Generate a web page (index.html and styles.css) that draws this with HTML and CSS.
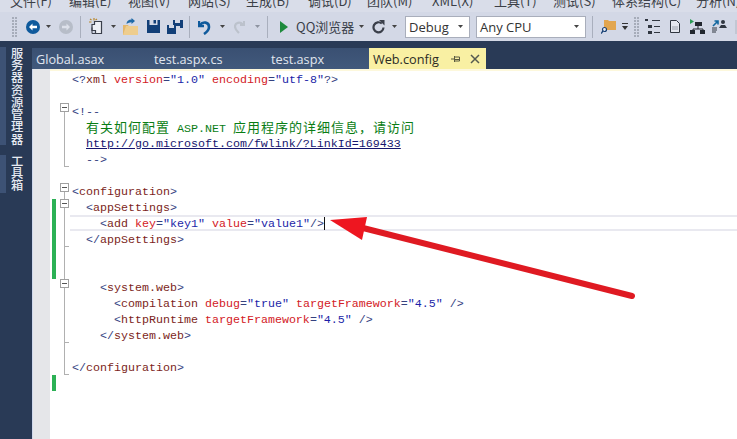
FILE: index.html
```
<!DOCTYPE html>
<html lang="zh">
<head>
<meta charset="utf-8">
<title>Web.config</title>
<link rel="stylesheet" href="styles.css">
</head>
<body>
<div class="app">
  <nav class="menu">
    <span class="mi w59">文件(F)</span><span class="mi w59">编辑(E)</span><span class="mi w60">视图(V)</span><span class="mi w58">网站(S)</span><span class="mi w62">生成(B)</span><span class="mi w59">调试(D)</span><span class="mi w65">团队(M)</span><span class="mi w62">XML(X)</span><span class="mi w59">工具(T)</span><span class="mi w59">测试(S)</span><span class="mi w84">体系结构(C)</span><span class="mi">分析(N)</span>
  </nav>
  <div class="toolbar">
    <span class="grip"></span>
    <svg class="m8" width="14" height="14" viewBox="0 0 14 14"><circle cx="7" cy="7" r="7" fill="#0f5a9c"/><path d="M3 7l3.500-3.500v2.300h4.500v2.400h-4.500v2.300z" fill="#fff"/></svg>
    <svg class="m6" width="5" height="3" viewBox="0 0 5 3"><path d="M0 0h5l-2.500 3z" fill="#444"/></svg>
    <svg class="m8" width="14" height="14" viewBox="0 0 14 14"><circle cx="7" cy="7" r="7" fill="#b7bdc8"/><path d="M11 7l-3.500-3.500v2.300h-4.500v2.400h4.500v2.300z" fill="#dde1ea"/></svg>
    <span class="sep m7"></span>
    <svg class="m8" width="14" height="17" viewBox="0 0 14 17"><path d="M1 1l1.500 1M5 0v2.500M8 1l-1.500 1M0 4h2.500" stroke="#b9872a" stroke-width="1.200" fill="none"/><path d="M5.500 3.500h7v12h-6v-3h-3.500v-6h2.500z" fill="#eef0f5" stroke="#3a3f4a" stroke-width="1.200"/><path d="M3 9.500v6h3" stroke="#3a3f4a" fill="none"/></svg>
    <svg class="m8" width="5" height="3" viewBox="0 0 5 3"><path d="M0 0h5l-2.500 3z" fill="#444"/></svg>
    <svg class="m7" width="15" height="17" viewBox="0 0 15 17"><path d="M0 7h5l1.500 2h8.500v8h-15z" fill="#e3b76c"/><path d="M3 8h12v9h-15z" fill="#eecd8e"/><path d="M3.500 6c0-3 2-4.500 5-4.500v-1.500l3.500 3-3.500 3v-1.800c-2 0-3.200 .7-5 1.800z" fill="#1f6aa8"/></svg>
    <svg class="m9" width="13" height="13" viewBox="0 0 13 13"><path d="M0 0h13v13h-13z" fill="#123f78"/><rect x="2.500" y="0" width="8" height="5" fill="#d3d8e6"/><rect x="6.500" y="0" width="2.500" height="3.500" fill="#123f78"/></svg>
    <svg class="m7" width="16" height="14" viewBox="0 0 16 14"><path d="M6 0h10v8h-3v-2h-7z" fill="#123f78"/><rect x="8" y="0" width="5" height="3" fill="#d3d8e6"/><path d="M0 5h9v9h-9z" fill="#123f78"/><rect x="2" y="5" width="5" height="3" fill="#d3d8e6"/></svg>
    <span class="sep m6"></span>
    <svg class="m8" width="13" height="16" viewBox="0 0 13 16"><path d="M1 2v5h5" fill="none" stroke="#0f5a9c" stroke-width="2.400"/><path d="M2 6c3-4 9-3 9 2 0 3-2 5-5 7" fill="none" stroke="#0f5a9c" stroke-width="2.600"/></svg>
    <svg class="m9" width="5" height="3" viewBox="0 0 5 3"><path d="M0 0h5l-2.500 3z" fill="#444"/></svg>
    <svg class="m9" width="11" height="14" viewBox="0 0 11 14"><path d="M10 1v4h-4" fill="none" stroke="#bcc2cc" stroke-width="2"/><path d="M9 4.500c-3-3-8-2-8 2 0 3 2 4.500 4 6.500" fill="none" stroke="#bcc2cc" stroke-width="2.200"/></svg>
    <svg class="m10" width="5" height="3" viewBox="0 0 5 3"><path d="M0 0h5l-2.500 3z" fill="#8d93a0"/></svg>
    <span class="sep m7"></span>
    <svg class="m12" width="8" height="12" viewBox="0 0 8 12"><path d="M0 0l8 6-8 6z" fill="#1d8a3c"/></svg>
    <span class="qq m8">QQ浏览器</span>
    <svg class="m7" width="5" height="3" viewBox="0 0 5 3"><path d="M0 0h5l-2.500 3z" fill="#444"/></svg>
    <svg class="m8" width="13" height="14" viewBox="0 0 13 14"><path d="M9.800 3.500a5 5 0 1 0 1.700 4" fill="none" stroke="#3a3f4a" stroke-width="2.200"/><path d="M7 0h5.500v5.500z" fill="#3a3f4a"/></svg>
    <svg class="m7" width="5" height="3" viewBox="0 0 5 3"><path d="M0 0h5l-2.500 3z" fill="#444"/></svg>
    <div class="combo debug m8"><span>Debug</span><svg width="5" height="3" viewBox="0 0 5 3"><path d="M0 0h5l-2.500 3z" fill="#444"/></svg></div>
    <div class="combo cpu m6"><span>Any CPU</span><svg width="5" height="3" viewBox="0 0 5 3"><path d="M0 0h5l-2.500 3z" fill="#444"/></svg></div>
    <span class="sep m6"></span>
    <svg class="m8" width="15" height="15" viewBox="0 0 15 15"><path d="M3 1h4l1 1h7v9h-12z" fill="#e2a64f"/><circle cx="3.500" cy="10.500" r="2" fill="#eef0f5" stroke="#163f73" stroke-width="1.200"/><path d="M2 12l-2 2.500" stroke="#163f73" stroke-width="1.400"/></svg>
    <svg class="m6" width="6" height="7" viewBox="0 0 6 7"><path d="M0 0h6v1h-6zM0 3h6l-3 4z" fill="#333"/></svg>
    <span class="grip m6"></span>
    <svg class="m5" width="15" height="15" viewBox="0 0 15 15"><path d="M0 0h3v2h-3zM3 6h4v3h-4zM3 12h4v3h-4zM9 7h6v1h-6zM9 13h6v1h-6zM7 1h8v1h-8z" fill="#303640"/></svg>
    <svg class="m10" width="10" height="13" viewBox="0 0 10 13"><path d="M.5 .5h6l3 3v9h-9z" fill="#e4e7ef" stroke="#303640"/><path d="M2 7h6M2 9h6" stroke="#9aa0ab"/></svg>
    <svg class="m10" width="15" height="15" viewBox="0 0 15 15"><path d="M0 0l4 2.500-4 2.500z" fill="#2a9a55"/><rect x="5" y="3" width="7" height="4" fill="#22272f"/><path d="M8 7v3M3 12v-2h10v2" stroke="#22272f" fill="none"/><rect x="0" y="11" width="5" height="4" fill="#22272f"/><rect x="10" y="11" width="5" height="4" fill="#22272f"/></svg>
    <svg class="m7" width="15" height="15" viewBox="0 0 15 15"><path d="M1 7l5-5m-3.500 0h3.500v3.500" stroke="#12679f" stroke-width="1.600" fill="none"/><circle cx="11" cy="3" r="2" fill="#303640"/><path d="M7 9l2-3h4l2 3z" fill="#303640"/><path d="M0 9h5M0 11h5M0 13h4" stroke="#303640"/></svg>
    <span class="faint m8"></span>
  </div>
  <div class="main">
    <aside class="side">
      <div class="stab st1"><i></i><span>服务器资源管理器</span></div>
      <div class="stab st2"><i></i><span>工具箱</span></div>
    </aside>
    <section class="doc">
      <div class="tabs">
        <div class="tab t1">Global.asax</div>
        <div class="tab t2">test.aspx.cs</div>
        <div class="tab t3">test.aspx</div>
        <div class="tab active">
          <span>Web.config</span>
          <svg class="pin" width="10" height="8" viewBox="0 0 10 8"><path d="M0 4h3M3.500 1v6M3.500 2h5v4h-5M3.500 4.500h5" fill="none" stroke="#5a5a40"/></svg>
          <svg class="close" width="10" height="10" viewBox="0 0 10 10"><path d="M1 1l8 8M9 1l-8 8" stroke="#555a50" stroke-width="1.500"/></svg>
        </div>
      </div>
      <div class="editor">
        <div class="gutter"></div>
        <div class="code">
          <div class="line"><b class="chg"></b><b class="fold"></b><span class="txt"><s>&lt;?</s><u>xml</u> <em>version</em><s>=</s><q>"1.0"</q> <em>encoding</em><s>=</s><q>"utf-8"</q><s>?&gt;</s></span></div>
          <div class="line"><b class="chg"></b><b class="fold"></b><span class="txt"></span></div>
          <div class="line"><b class="chg"></b><b class="fold box low"><i></i></b><span class="txt"><s>&lt;!--</s></span></div>
          <div class="line"><b class="chg"></b><b class="fold bar"></b><span class="txt cm">  <span class="cjk">有关如何配置</span> ASP.NET <span class="cjk">应用程序的详细信息，请访问</span></span></div>
          <div class="line"><b class="chg"></b><b class="fold bar"></b><span class="txt">  <a class="lnk">http://go.microsoft.com/fwlink/?LinkId=169433</a></span></div>
          <div class="line"><b class="chg"></b><b class="fold bar tick"></b><span class="txt">  <s>--&gt;</s></span></div>
          <div class="line"><b class="chg"></b><b class="fold"></b><span class="txt"></span></div>
          <div class="line"><b class="chg"></b><b class="fold box low"><i></i></b><span class="txt"><s>&lt;</s><u>configuration</u><s>&gt;</s></span></div>
          <div class="line"><b class="chg on"></b><b class="fold box bar"><i></i></b><span class="txt">  <s>&lt;</s><u>appSettings</u><s>&gt;</s></span></div>
          <div class="line"><b class="chg on"></b><b class="fold bar"></b><span class="txt cur">    <s>&lt;</s><u>add</u> <em>key</em><s>=</s><q>"key1"</q> <em>value</em><s>=</s><q>"value1"</q><s>/&gt;</s><span class="caret"></span></span></div>
          <div class="line"><b class="chg on"></b><b class="fold bar tick"></b><span class="txt">  <s>&lt;/</s><u>appSettings</u><s>&gt;</s></span></div>
          <div class="line"><b class="chg on"></b><b class="fold bar"></b><span class="txt"></span></div>
          <div class="line"><b class="chg on"></b><b class="fold bar"></b><span class="txt"></span></div>
          <div class="line"><b class="chg"></b><b class="fold box bar"><i></i></b><span class="txt">    <s>&lt;</s><u>system.web</u><s>&gt;</s></span></div>
          <div class="line"><b class="chg"></b><b class="fold bar"></b><span class="txt">      <s>&lt;</s><u>compilation</u> <em>debug</em><s>=</s><q>"true"</q> <em>targetFramework</em><s>=</s><q>"4.5"</q> <s>/&gt;</s></span></div>
          <div class="line"><b class="chg"></b><b class="fold bar"></b><span class="txt">      <s>&lt;</s><u>httpRuntime</u> <em>targetFramework</em><s>=</s><q>"4.5"</q> <s>/&gt;</s></span></div>
          <div class="line"><b class="chg"></b><b class="fold bar tick"></b><span class="txt">    <s>&lt;/</s><u>system.web</u><s>&gt;</s></span></div>
          <div class="line"><b class="chg"></b><b class="fold bar"></b><span class="txt"></span></div>
          <div class="line"><b class="chg"></b><b class="fold bar tick"></b><span class="txt"><s>&lt;/</s><u>configuration</u><s>&gt;</s></span></div>
          <div class="line"><b class="chg on"></b><b class="fold"></b><span class="txt"></span></div>
        </div>
      </div>
    </section>
  </div>
  <svg class="arrow" width="737" height="439" viewBox="0 0 737 439">
    <path d="M363 228L632 296" stroke="#df1a22" stroke-width="6" stroke-linecap="round" fill="none"/>
    <path d="M330 220L367 217L362 240z" fill="#ee1620"/>
  </svg>
</div>
</body>
</html>
```
FILE: styles.css
```
* { box-sizing: border-box; }
html, body { margin: 0; padding: 0; height: 100%; overflow: hidden; }
.app { width: 737px; height: 439px; display: flex; flex-direction: column; position: relative; overflow: hidden; background: #293a56; font-family: "Open Sans", "Noto Sans CJK SC", sans-serif; }

.menu { height: 12px; flex: none; display: flex; padding-left: 10px; background: #d9dde9; overflow: hidden; font: 13px/16px "Noto Sans CJK SC", sans-serif; color: #3b3f47; align-items: flex-end; }
.mi { flex: none; display: block; height: 16px; margin-bottom: 3px; white-space: nowrap; }
.w59 { width: 59px; } .w60 { width: 60px; } .w58 { width: 58px; } .w62 { width: 62px; } .w65 { width: 65px; } .w84 { width: 84px; }

.toolbar { height: 29px; flex: none; display: flex; align-items: center; padding-left: 12px; background: #d3d8e6; overflow: hidden; }
.toolbar > * { flex: none; }
.m5 { margin-left: 5px; } .m6 { margin-left: 6px; } .m7 { margin-left: 7px; } .m8 { margin-left: 8px; } .m9 { margin-left: 9px; } .m10 { margin-left: 10px; } .m12 { margin-left: 12px; }
.grip { width: 6px; height: 20px; background: radial-gradient(circle at 1px 1px, #a6acb9 1px, transparent 1px) 0 0 / 3px 3px; }
.sep { width: 1px; height: 22px; background: #a9afbd; }
.qq { width: 56px; font: 13px/18px "Noto Sans CJK SC", sans-serif; color: #3a3f4a; white-space: nowrap; }
.combo { height: 22px; display: flex; align-items: center; justify-content: space-between; padding: 0 6px 0 3px; background: #fff; border: 1px solid #a9aebb; font: 13px/18px "Open Sans", sans-serif; color: #333; }
.debug { width: 65px; }
.cpu { width: 110px; }
.faint { width: 2px; height: 14px; background: #c2c7d3; }

.main { flex: 1; display: flex; min-height: 0; }
.side { width: 32px; flex: none; display: flex; flex-direction: column; padding-top: 6px; gap: 10px; background: #293a56; }
.stab { display: flex; }
.stab i { width: 6px; background: #3d5275; }
.stab span { writing-mode: vertical-rl; width: 18px; font: 500 12.250px/14px "Noto Sans CJK SC", sans-serif; color: #e6eaf2; }
.st1 { height: 98px; }
.st2 { height: 38px; }

.doc { flex: 1; display: flex; flex-direction: column; min-width: 0; }
.tabs { height: 28px; flex: none; display: flex; padding-top: 7px; background: #293a56; }
.tab { height: 21px; padding-left: 4px; font-size: 12.700px; line-height: 22px; color: #e1e6ef; background: linear-gradient(#3a5072, #41597c); white-space: nowrap; }
.t1 { width: 118px; }
.t2 { width: 117px; }
.t3 { width: 102px; }
.tab.active { width: 117px; display: flex; align-items: center; color: #2b2b25; background: #f9f0a3; }
.pin { margin-left: 12px; }
.close { margin-left: 9px; }

.editor { flex: 1; display: flex; background: #fff; border-top: 2px solid #fdf8dc; min-height: 0; }
.gutter { width: 18px; flex: none; background: #e5e6e9; border-left: 1px solid #cfd8ec; margin-top: -2px; }
.code { flex: 1; min-width: 0; }
.line { height: 16px; display: flex; padding-left: 2px; }
.line b { display: block; flex: none; font-weight: 400; }
.chg { width: 4px; }
.chg.on { background: #2cb155; }
.fold { width: 14px; display: flex; align-items: center; padding-left: 4px; background-repeat: no-repeat; }
.fold.bar { background-image: linear-gradient(#b0b0b0, #b0b0b0); background-size: 1px 100%; background-position: 8px 0; }
.fold.low { background-image: linear-gradient(#b0b0b0, #b0b0b0); background-size: 1px 50%; background-position: 8px 100%; }
.fold.tick { background-image: linear-gradient(#b0b0b0, #b0b0b0), linear-gradient(#b0b0b0, #b0b0b0); background-size: 1px 100%, 5px 1px; background-position: 8px 0, 8px 100%; }
.fold i { display: flex; width: 9px; height: 9px; border: 1px solid #a0a0a0; background: linear-gradient(#555, #555) center / 5px 1px no-repeat, #fff; }

.txt { flex: 1; height: 16px; padding: 1px 0 0 2px; font: 11.670px/16px "Liberation Mono", monospace; white-space: pre; color: #222; }
.txt s { text-decoration: none; color: #34417f; }
.txt u { text-decoration: none; color: #7c1f22; }
.txt em { font-style: normal; color: #d32026; }
.txt q { quotes: none; color: #1b1fa8; }
.txt.cm { color: #0a7d14; padding-top: 0; }
.cjk { font: 13px/16px "Noto Sans CJK SC", sans-serif; letter-spacing: 1px; }
.lnk { color: #15156e; text-decoration: underline; }
.txt.cur { padding-top: 0; border-top: 2px solid #e9e9f0; border-bottom: 2px solid #e9e9f0; line-height: 12px; }
.caret { display: inline-block; width: 1px; height: 13px; background: #111; vertical-align: middle; }

.arrow { position: absolute; left: 0; top: 0; pointer-events: none; }
```
